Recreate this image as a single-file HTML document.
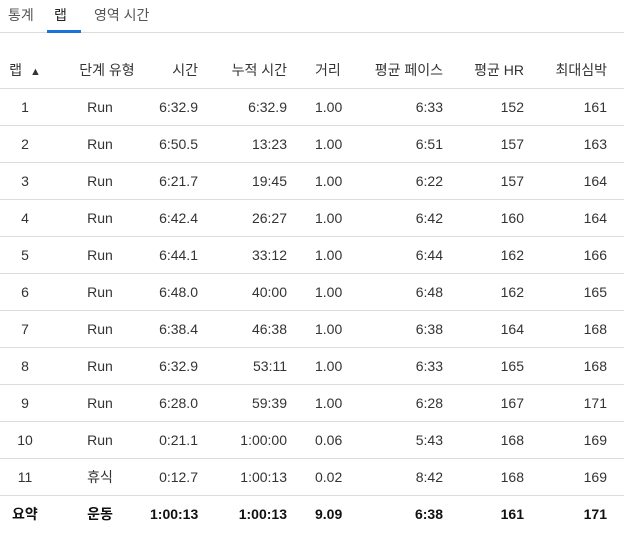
<!DOCTYPE html>
<html><head><meta charset="utf-8"><style>
body{margin:0;background:#fff;font-family:"Liberation Sans","Noto Sans CJK KR",sans-serif;font-size:14px;color:#333;width:624px;height:533px;overflow:hidden}
.tabs{position:relative;height:32px;border-bottom:1px solid #ddd}
.tab{position:absolute;top:5px;font-size:14px;color:#555}
.tab.a{color:#222}
.ul{position:absolute;left:47px;top:30px;width:34px;height:3px;background:#1a73d8}
table{position:absolute;top:52px;left:0;border-collapse:collapse;width:624px;table-layout:fixed}
td{height:36px;padding:0;border-bottom:1px solid #ddd;white-space:nowrap}
tr.h td{height:36px}
tr.s td{border-bottom:none;font-weight:bold;color:#111}
.c{text-align:center}.r{text-align:right}.l{text-align:left;padding-left:28px}
</style></head><body>
<div class="tabs"><span class="tab" style="left:8px">통계</span><span class="tab a" style="left:54px">랩</span><span class="tab" style="left:94px">영역 시간</span><div class="ul"></div></div>
<table>
<colgroup><col style="width:50px"><col style="width:100px"><col style="width:48px"><col style="width:89px"><col style="width:83px"><col style="width:73px"><col style="width:81px"><col style="width:100px"></colgroup>
<tr class="h"><td class="c">랩 <span style="font-size:11px;margin-left:4px">▲</span></td><td class="c" style="padding-left:14px">단계 유형</td><td class="r">시간</td><td class="r">누적 시간</td><td class="l">거리</td><td class="r">평균 페이스</td><td class="r">평균 HR</td><td class="r" style="padding-right:17px">최대심박</td></tr>
<tr><td class="c">1</td><td class="c">Run</td><td class="r">6:32.9</td><td class="r">6:32.9</td><td class="l">1.00</td><td class="r">6:33</td><td class="r">152</td><td class="r" style="padding-right:17px">161</td></tr>
<tr><td class="c">2</td><td class="c">Run</td><td class="r">6:50.5</td><td class="r">13:23</td><td class="l">1.00</td><td class="r">6:51</td><td class="r">157</td><td class="r" style="padding-right:17px">163</td></tr>
<tr><td class="c">3</td><td class="c">Run</td><td class="r">6:21.7</td><td class="r">19:45</td><td class="l">1.00</td><td class="r">6:22</td><td class="r">157</td><td class="r" style="padding-right:17px">164</td></tr>
<tr><td class="c">4</td><td class="c">Run</td><td class="r">6:42.4</td><td class="r">26:27</td><td class="l">1.00</td><td class="r">6:42</td><td class="r">160</td><td class="r" style="padding-right:17px">164</td></tr>
<tr><td class="c">5</td><td class="c">Run</td><td class="r">6:44.1</td><td class="r">33:12</td><td class="l">1.00</td><td class="r">6:44</td><td class="r">162</td><td class="r" style="padding-right:17px">166</td></tr>
<tr><td class="c">6</td><td class="c">Run</td><td class="r">6:48.0</td><td class="r">40:00</td><td class="l">1.00</td><td class="r">6:48</td><td class="r">162</td><td class="r" style="padding-right:17px">165</td></tr>
<tr><td class="c">7</td><td class="c">Run</td><td class="r">6:38.4</td><td class="r">46:38</td><td class="l">1.00</td><td class="r">6:38</td><td class="r">164</td><td class="r" style="padding-right:17px">168</td></tr>
<tr><td class="c">8</td><td class="c">Run</td><td class="r">6:32.9</td><td class="r">53:11</td><td class="l">1.00</td><td class="r">6:33</td><td class="r">165</td><td class="r" style="padding-right:17px">168</td></tr>
<tr><td class="c">9</td><td class="c">Run</td><td class="r">6:28.0</td><td class="r">59:39</td><td class="l">1.00</td><td class="r">6:28</td><td class="r">167</td><td class="r" style="padding-right:17px">171</td></tr>
<tr><td class="c">10</td><td class="c">Run</td><td class="r">0:21.1</td><td class="r">1:00:00</td><td class="l">0.06</td><td class="r">5:43</td><td class="r">168</td><td class="r" style="padding-right:17px">169</td></tr>
<tr><td class="c">11</td><td class="c">휴식</td><td class="r">0:12.7</td><td class="r">1:00:13</td><td class="l">0.02</td><td class="r">8:42</td><td class="r">168</td><td class="r" style="padding-right:17px">169</td></tr>
<tr class="s"><td style="padding-left:12px">요약</td><td class="c">운동</td><td class="r">1:00:13</td><td class="r">1:00:13</td><td class="l">9.09</td><td class="r">6:38</td><td class="r">161</td><td class="r" style="padding-right:17px">171</td></tr>
</table>
</body></html>
